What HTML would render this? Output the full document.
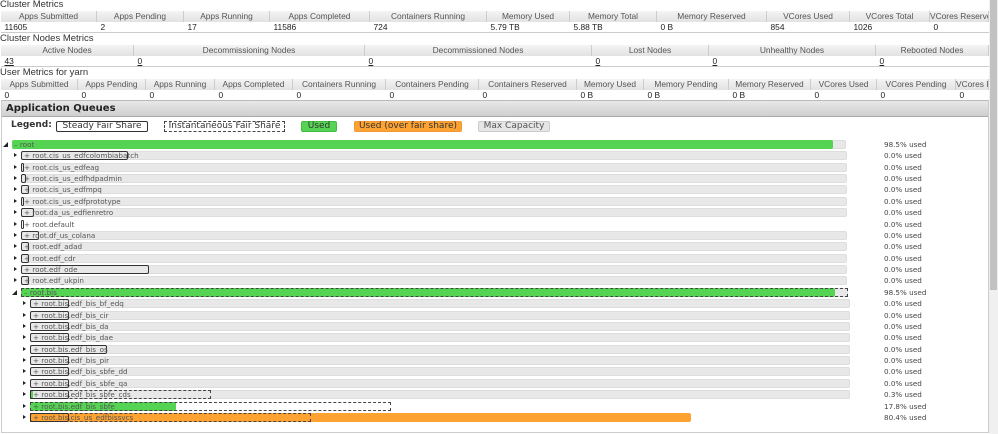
<!DOCTYPE html>
<html><head><meta charset="utf-8"><style>
*{margin:0;padding:0;box-sizing:border-box}
body{width:998px;height:434px;overflow:hidden;background:#fff;font-family:"Liberation Sans",Arial,sans-serif;position:relative;color:#222}
.t{position:absolute;left:0;font-size:9.5px;color:#333}
table{position:absolute;left:0;width:988px;border-collapse:collapse;table-layout:fixed;font-size:8.4px}
th{font-weight:normal;color:#555;background:linear-gradient(#f4f4f4,#e2e2e2);height:11px;border-left:1px solid #fff;border-right:1px solid #ccc;text-align:center;white-space:nowrap;overflow:hidden;line-height:11px}
td{height:10px;line-height:10px;padding-left:4px;border-bottom:1px solid #ccc;color:#222;white-space:nowrap}
td u{color:#222}
#sb{position:absolute;left:989px;top:0;width:9px;height:434px;background:#f0f0f0}
#sb div{position:absolute;left:1px;top:0;width:7px;height:290px;background:#c2c2c2}
#panel{position:absolute;left:1px;top:100px;width:988px;height:333px;border:1px solid #ccc;border-top:1px solid #bbb}
#ph{position:absolute;left:0;top:0;width:986px;height:16px;background:linear-gradient(#e8e8e8,#cfcfcf);font:bold 10px "DejaVu Sans",Verdana,sans-serif;line-height:16px;padding-left:4px;color:#222;border-bottom:1px solid #aaa}
.lg{position:absolute;top:20px;height:11px;font:9px "DejaVu Sans",Verdana,sans-serif;line-height:9px;text-align:center;color:#333}
.row{position:absolute;left:0;height:9px;width:990px;font:7.2px "DejaVu Sans",Verdana,sans-serif;color:#555}
.row>*{position:absolute}
.tri{width:0;height:0;border-top:2.5px solid transparent;border-bottom:2.5px solid transparent;border-left:3.5px solid #222;top:2px}
svg.d{top:2px;width:5px;height:5px}
.bar{top:0;height:9px;background:#e8e8e8;border:1px solid #ddd;border-radius:2px}
.g{top:0;height:9px;background:#55d453;border-radius:2px}
.o{top:0;height:9px;background:#fea332;border-radius:2px}
.bx{top:0;height:9px;border:1px solid #333;border-radius:2px}
.dx{top:0;height:9px;border:1px dashed #444}
.lb{top:0;line-height:9px;white-space:nowrap}
.pc{left:884px;top:0;line-height:9px;color:#444}
</style></head><body>
<div class="t" style="top:-1px">Cluster Metrics</div>
<table style="top:11px"><colgroup><col style="width:96px"><col style="width:87px"><col style="width:86px"><col style="width:100px"><col style="width:117px"><col style="width:83px"><col style="width:87px"><col style="width:110px"><col style="width:83px"><col style="width:80px"><col style="width:59px"></colgroup>
<tr><th>Apps Submitted</th><th>Apps Pending</th><th>Apps Running</th><th>Apps Completed</th><th>Containers Running</th><th>Memory Used</th><th>Memory Total</th><th>Memory Reserved</th><th>VCores Used</th><th>VCores Total</th><th>VCores Reserved</th></tr>
<tr><td>11605</td><td>2</td><td>17</td><td>11586</td><td>724</td><td>5.79 TB</td><td>5.88 TB</td><td>0 B</td><td>854</td><td>1026</td><td>0</td></tr></table>
<div class="t" style="top:33px">Cluster Nodes Metrics</div>
<table style="top:45px"><colgroup><col style="width:133px"><col style="width:231px"><col style="width:227px"><col style="width:117px"><col style="width:167px"><col style="width:113px"></colgroup>
<tr><th>Active Nodes</th><th>Decommissioning Nodes</th><th>Decommissioned Nodes</th><th>Lost Nodes</th><th>Unhealthy Nodes</th><th>Rebooted Nodes</th></tr>
<tr><td><u>43</u></td><td><u>0</u></td><td><u>0</u></td><td><u>0</u></td><td><u>0</u></td><td><u>0</u></td></tr></table>
<div class="t" style="top:67px">User Metrics for yarn</div>
<table style="top:79px"><colgroup><col style="width:77px"><col style="width:68px"><col style="width:69px"><col style="width:78px"><col style="width:93px"><col style="width:93px"><col style="width:98px"><col style="width:67px"><col style="width:85px"><col style="width:82px"><col style="width:66px"><col style="width:79px"><col style="width:33px"></colgroup>
<tr><th>Apps Submitted</th><th>Apps Pending</th><th>Apps Running</th><th>Apps Completed</th><th>Containers Running</th><th>Containers Pending</th><th>Containers Reserved</th><th>Memory Used</th><th>Memory Pending</th><th>Memory Reserved</th><th>VCores Used</th><th>VCores Pending</th><th>VCores Reserved</th></tr>
<tr><td>0</td><td>0</td><td>0</td><td>0</td><td>0</td><td>0</td><td>0</td><td>0 B</td><td>0 B</td><td>0 B</td><td>0</td><td>0</td><td>0</td></tr></table>
<div id="sb"><div></div></div>
<div id="panel">
<div id="ph">Application Queues</div>
<div class="lg" style="left:9px;font-weight:bold;text-align:left">Legend:</div>
<div class="lg" style="left:54px;width:92px;border:1px solid #333;border-radius:2px">Steady Fair Share</div>
<div class="lg" style="left:162px;width:121px;border:1px dashed #444">Instantaneous Fair Share</div>
<div class="lg" style="left:299px;width:36px;background:#55d453;border:1px solid #4b4;border-radius:2px">Used</div>
<div class="lg" style="left:352px;width:108px;background:#fea332;border:1px solid #e93;border-radius:2px">Used (over fair share)</div>
<div class="lg" style="left:476px;width:72px;background:#e6e6e6;border:1px solid #ccc;border-radius:2px;color:#555">Max Capacity</div>
</div>

<div class="row" style="top:140px"><svg class="d" style="left:3px" viewBox="0 0 5 5"><polygon points="5,0 5,5 0,5" fill="#222"/></svg><span class="bar" style="left:12px;width:834px"></span><span class="g" style="left:12px;width:821px"></span><span class="lb" style="left:14px">– root</span><span class="pc">98.5% used</span></div>
<div class="row" style="top:151px"><span class="tri" style="left:14px"></span><span class="bar" style="left:21px;width:826px"></span><span class="bx" style="left:21px;width:107px"></span><span class="lb" style="left:24px">+ root.cis_us_edfcolombiabatch</span><span class="pc">0.0% used</span></div>
<div class="row" style="top:163px"><span class="tri" style="left:14px"></span><span class="bar" style="left:21px;width:826px"></span><span class="bx" style="left:21px;width:3px"></span><span class="lb" style="left:24px">+ root.cis_us_edfeag</span><span class="pc">0.0% used</span></div>
<div class="row" style="top:174px"><span class="tri" style="left:14px"></span><span class="bar" style="left:21px;width:826px"></span><span class="bx" style="left:21px;width:5px"></span><span class="lb" style="left:24px">+ root.cis_us_edfhdpadmin</span><span class="pc">0.0% used</span></div>
<div class="row" style="top:185px"><span class="tri" style="left:14px"></span><span class="bar" style="left:21px;width:826px"></span><span class="bx" style="left:21px;width:8px"></span><span class="lb" style="left:24px">+ root.cis_us_edfmpq</span><span class="pc">0.0% used</span></div>
<div class="row" style="top:197px"><span class="tri" style="left:14px"></span><span class="bar" style="left:21px;width:826px"></span><span class="bx" style="left:21px;width:3px"></span><span class="lb" style="left:24px">+ root.cis_us_edfprototype</span><span class="pc">0.0% used</span></div>
<div class="row" style="top:208px"><span class="tri" style="left:14px"></span><span class="bar" style="left:21px;width:826px"></span><span class="bx" style="left:21px;width:13px"></span><span class="lb" style="left:24px">+ root.da_us_edfienretro</span><span class="pc">0.0% used</span></div>
<div class="row" style="top:220px"><span class="tri" style="left:14px"></span><span class="bx" style="left:21px;width:3px"></span><span class="lb" style="left:24px">+ root.default</span><span class="pc">0.0% used</span></div>
<div class="row" style="top:231px"><span class="tri" style="left:14px"></span><span class="bar" style="left:21px;width:826px"></span><span class="bx" style="left:21px;width:18px"></span><span class="lb" style="left:24px">+ root.df_us_colana</span><span class="pc">0.0% used</span></div>
<div class="row" style="top:242px"><span class="tri" style="left:14px"></span><span class="bar" style="left:21px;width:826px"></span><span class="bx" style="left:21px;width:8px"></span><span class="lb" style="left:24px">+ root.edf_adad</span><span class="pc">0.0% used</span></div>
<div class="row" style="top:254px"><span class="tri" style="left:14px"></span><span class="bar" style="left:21px;width:826px"></span><span class="bx" style="left:21px;width:8px"></span><span class="lb" style="left:24px">+ root.edf_cdr</span><span class="pc">0.0% used</span></div>
<div class="row" style="top:265px"><span class="tri" style="left:14px"></span><span class="bar" style="left:21px;width:826px"></span><span class="bx" style="left:21px;width:128px"></span><span class="lb" style="left:24px">+ root.edf_ode</span><span class="pc">0.0% used</span></div>
<div class="row" style="top:276px"><span class="tri" style="left:14px"></span><span class="bar" style="left:21px;width:826px"></span><span class="bx" style="left:21px;width:8px"></span><span class="lb" style="left:24px">+ root.edf_ukpin</span><span class="pc">0.0% used</span></div>
<div class="row" style="top:288px"><svg class="d" style="left:12px" viewBox="0 0 5 5"><polygon points="5,0 5,5 0,5" fill="#222"/></svg><span class="bar" style="left:21px;width:827px"></span><span class="g" style="left:21px;width:814px"></span><span class="dx" style="left:21px;width:827px"></span><span class="lb" style="left:24px">– root.bis</span><span class="pc">98.5% used</span></div>
<div class="row" style="top:299px"><span class="tri" style="left:23px"></span><span class="bar" style="left:30px;width:820px"></span><span class="bx" style="left:30px;width:39px"></span><span class="lb" style="left:33px">+ root.bis.edf_bis_bf_edq</span><span class="pc">0.0% used</span></div>
<div class="row" style="top:311px"><span class="tri" style="left:23px"></span><span class="bar" style="left:30px;width:820px"></span><span class="bx" style="left:30px;width:39px"></span><span class="lb" style="left:33px">+ root.bis.edf_bis_cir</span><span class="pc">0.0% used</span></div>
<div class="row" style="top:322px"><span class="tri" style="left:23px"></span><span class="bar" style="left:30px;width:820px"></span><span class="bx" style="left:30px;width:39px"></span><span class="lb" style="left:33px">+ root.bis.edf_bis_da</span><span class="pc">0.0% used</span></div>
<div class="row" style="top:333px"><span class="tri" style="left:23px"></span><span class="bar" style="left:30px;width:820px"></span><span class="bx" style="left:30px;width:39px"></span><span class="lb" style="left:33px">+ root.bis.edf_bis_dae</span><span class="pc">0.0% used</span></div>
<div class="row" style="top:345px"><span class="tri" style="left:23px"></span><span class="bar" style="left:30px;width:820px"></span><span class="bx" style="left:30px;width:77px"></span><span class="lb" style="left:33px">+ root.bis.edf_bis_os</span><span class="pc">0.0% used</span></div>
<div class="row" style="top:356px"><span class="tri" style="left:23px"></span><span class="bar" style="left:30px;width:820px"></span><span class="bx" style="left:30px;width:39px"></span><span class="lb" style="left:33px">+ root.bis.edf_bis_pir</span><span class="pc">0.0% used</span></div>
<div class="row" style="top:367px"><span class="tri" style="left:23px"></span><span class="bar" style="left:30px;width:820px"></span><span class="bx" style="left:30px;width:39px"></span><span class="lb" style="left:33px">+ root.bis.edf_bis_sbfe_dd</span><span class="pc">0.0% used</span></div>
<div class="row" style="top:379px"><span class="tri" style="left:23px"></span><span class="bar" style="left:30px;width:820px"></span><span class="bx" style="left:30px;width:39px"></span><span class="lb" style="left:33px">+ root.bis.edf_bis_sbfe_qa</span><span class="pc">0.0% used</span></div>
<div class="row" style="top:390px"><span class="tri" style="left:23px"></span><span class="bar" style="left:30px;width:820px"></span><span class="g" style="left:30px;width:3px"></span><span class="dx" style="left:30px;width:181px"></span><span class="bx" style="left:30px;width:39px"></span><span class="lb" style="left:33px">+ root.bis.edf_bis_sbfe_cds</span><span class="pc">0.3% used</span></div>
<div class="row" style="top:402px"><span class="tri" style="left:23px"></span><span class="g" style="left:30px;width:146px"></span><span class="dx" style="left:30px;width:361px"></span><span class="lb" style="left:33px">+ root.bis.edf_bis_sbfe</span><span class="pc">17.8% used</span></div>
<div class="row" style="top:413px"><span class="tri" style="left:23px"></span><span class="o" style="left:30px;width:661px"></span><span class="dx" style="left:30px;width:281px"></span><span class="bx" style="left:30px;width:39px"></span><span class="lb" style="left:33px">+ root.bis.cis_us_edfbissvcs</span><span class="pc">80.4% used</span></div>
</body></html>
